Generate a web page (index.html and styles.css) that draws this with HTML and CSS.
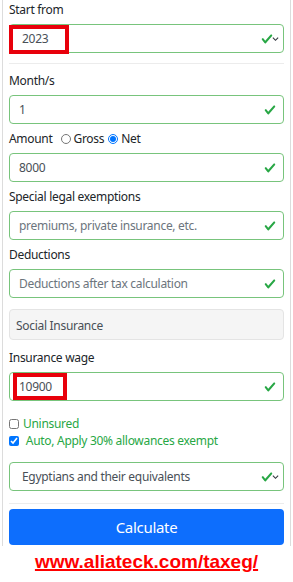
FILE: index.html
```html
<!DOCTYPE html>
<html lang="en">
<head>
  <meta charset="UTF-8" />
  <meta name="viewport" content="width=device-width, initial-scale=1.0" />
  <title>Tax calculator</title>
  <link rel="stylesheet" href="styles.css">
</head>
<body>
  <div class="card">
    <label class="lbl">Start from</label>
    <div class="field select">
      <span class="value">2023</span>
      <svg class="check" viewBox="0 0 8 8"><path d="M2.3 6.73L.6 4.53c-.4-1.04.46-1.4 1.1-.8l1.1 1.4 3.4-3.8c.6-.63 1.6-.27 1.2.7l-4 4.6c-.43.5-.8.4-1.1.1z"/></svg>
      <svg class="chev" viewBox="0 0 8 6"><path d="M1 1.5l3 3 3-3"/></svg>
      <div class="mark mark-year"></div>
    </div>

    <hr>

    <label class="lbl">Month/s</label>
    <div class="field">
      <span class="value">1</span>
      <svg class="check" viewBox="0 0 8 8"><path d="M2.3 6.73L.6 4.53c-.4-1.04.46-1.4 1.1-.8l1.1 1.4 3.4-3.8c.6-.63 1.6-.27 1.2.7l-4 4.6c-.43.5-.8.4-1.1.1z"/></svg>
    </div>

    <div class="lbl radios">
      <span>Amount</span>
      <label><input type="radio" name="amt"> Gross</label>
      <label><input type="radio" name="amt" checked> Net</label>
    </div>
    <div class="field">
      <span class="value">8000</span>
      <svg class="check" viewBox="0 0 8 8"><path d="M2.3 6.73L.6 4.53c-.4-1.04.46-1.4 1.1-.8l1.1 1.4 3.4-3.8c.6-.63 1.6-.27 1.2.7l-4 4.6c-.43.5-.8.4-1.1.1z"/></svg>
    </div>

    <label class="lbl">Special legal exemptions</label>
    <div class="field">
      <span class="value placeholder">premiums, private insurance, etc.</span>
      <svg class="check" viewBox="0 0 8 8"><path d="M2.3 6.73L.6 4.53c-.4-1.04.46-1.4 1.1-.8l1.1 1.4 3.4-3.8c.6-.63 1.6-.27 1.2.7l-4 4.6c-.43.5-.8.4-1.1.1z"/></svg>
    </div>

    <label class="lbl">Deductions</label>
    <div class="field">
      <span class="value placeholder">Deductions after tax calculation</span>
      <svg class="check" viewBox="0 0 8 8"><path d="M2.3 6.73L.6 4.53c-.4-1.04.46-1.4 1.1-.8l1.1 1.4 3.4-3.8c.6-.63 1.6-.27 1.2.7l-4 4.6c-.43.5-.8.4-1.1.1z"/></svg>
    </div>

    <div class="section">Social Insurance</div>

    <label class="lbl">Insurance wage</label>
    <div class="field">
      <span class="value">10900</span>
      <svg class="check" viewBox="0 0 8 8"><path d="M2.3 6.73L.6 4.53c-.4-1.04.46-1.4 1.1-.8l1.1 1.4 3.4-3.8c.6-.63 1.6-.27 1.2.7l-4 4.6c-.43.5-.8.4-1.1.1z"/></svg>
      <div class="mark mark-wage"></div>
    </div>

    <div class="checks">
      <label class="chk"><input type="checkbox"> Uninsured</label>
      <label class="chk"><input type="checkbox" checked> &nbsp;Auto, Apply 30% allowances exempt</label>
    </div>

    <div class="field select">
      <span class="value">Egyptians and their equivalents</span>
      <svg class="check" viewBox="0 0 8 8"><path d="M2.3 6.73L.6 4.53c-.4-1.04.46-1.4 1.1-.8l1.1 1.4 3.4-3.8c.6-.63 1.6-.27 1.2.7l-4 4.6c-.43.5-.8.4-1.1.1z"/></svg>
      <svg class="chev" viewBox="0 0 8 6"><path d="M1 1.5l3 3 3-3"/></svg>
    </div>

    <hr class="hr-bottom">

    <button class="btn">Calculate</button>
  </div>

  <div class="footer">
    <a href="#">www.aliateck.com/taxeg/</a>
  </div>
</body>
</html>
```

FILE: styles.css
```css
body {
  margin: 0;
  background: #fff;
  font-family: 'Noto Sans', 'Open Sans', sans-serif;
  font-size: 12px;
  letter-spacing: -0.3px;
  color: #212529;
}

.card {
  margin: 0 2px;
  padding: 0 6px 1px;
  border-left: 1px solid #dcdcdc;
  border-right: 1px solid #dcdcdc;
}

.lbl {
  display: block;
  height: 20px;
  line-height: 20px;
  margin: 5px 0 4px;
}

.card > .lbl:first-child {
  margin-top: 0;
}

.radios {
  display: flex;
  align-items: center;
}

.radios label {
  display: flex;
  align-items: center;
  margin-left: 4px;
}

.radios span {
  margin-right: 4px;
}

.radios input {
  width: 10px;
  height: 10px;
  margin: 0 3px 0 0;
}

.field {
  position: relative;
  display: flex;
  align-items: center;
  height: 29px;
  box-sizing: border-box;
  padding: 0 7px 0 9px;
  border: 1px solid #78c47c;
  border-radius: 4px;
  color: #495057;
}

.field .value {
  flex: 1;
}

.field .placeholder {
  color: #6c757d;
}

.select .value {
  padding-left: 3px;
}

.check {
  width: 12px;
  height: 12px;
  fill: #28a745;
}

.chev {
  width: 7px;
  height: 6px;
  margin-left: -1px;
  fill: none;
  stroke: #343a40;
  stroke-width: 1.3;
}

.select {
  padding-right: 4px;
}

.mark {
  position: absolute;
  border: 4px solid #e8000b;
  box-sizing: border-box;
}

.mark-year {
  left: -1px;
  top: 0;
  width: 60px;
  height: 29px;
}

.mark-wage {
  left: 3px;
  top: 0;
  width: 54px;
  height: 27px;
}

hr {
  border: none;
  border-top: 1px solid #ececec;
  margin: 10px 0 7px;
}

.section {
  margin-top: 11px;
  height: 31px;
  line-height: 31px;
  box-sizing: border-box;
  padding-left: 6px;
  background: #f5f5f5;
  border: 1px solid #e4e4e4;
  border-radius: 4px;
  color: #495057;
}

.section + .lbl {
  margin-top: 8px;
}

.checks {
  margin: 14px 0 13px;
}

.chk {
  display: flex;
  align-items: center;
  height: 17px;
  color: #28a745;
}

.chk input {
  width: 10px;
  height: 10px;
  margin: 0 4px 0 0;
}

.hr-bottom {
  margin: 12px 0 5px;
}

.btn {
  display: block;
  width: 100%;
  height: 36px;
  border: none;
  border-radius: 4px;
  background: #0d6efd;
  color: #fff;
  font-family: 'Noto Sans', 'Open Sans', sans-serif;
  font-size: 15px;
  letter-spacing: -0.3px;
}

.footer {
  text-align: center;
  padding-top: 5px;
}

.footer a {
  font-family: 'Liberation Sans', Arial, sans-serif;
  font-weight: bold;
  font-size: 19px;
  letter-spacing: 0;
  color: #f00;
  text-decoration: underline;
  text-decoration-thickness: 2px;
}
```
